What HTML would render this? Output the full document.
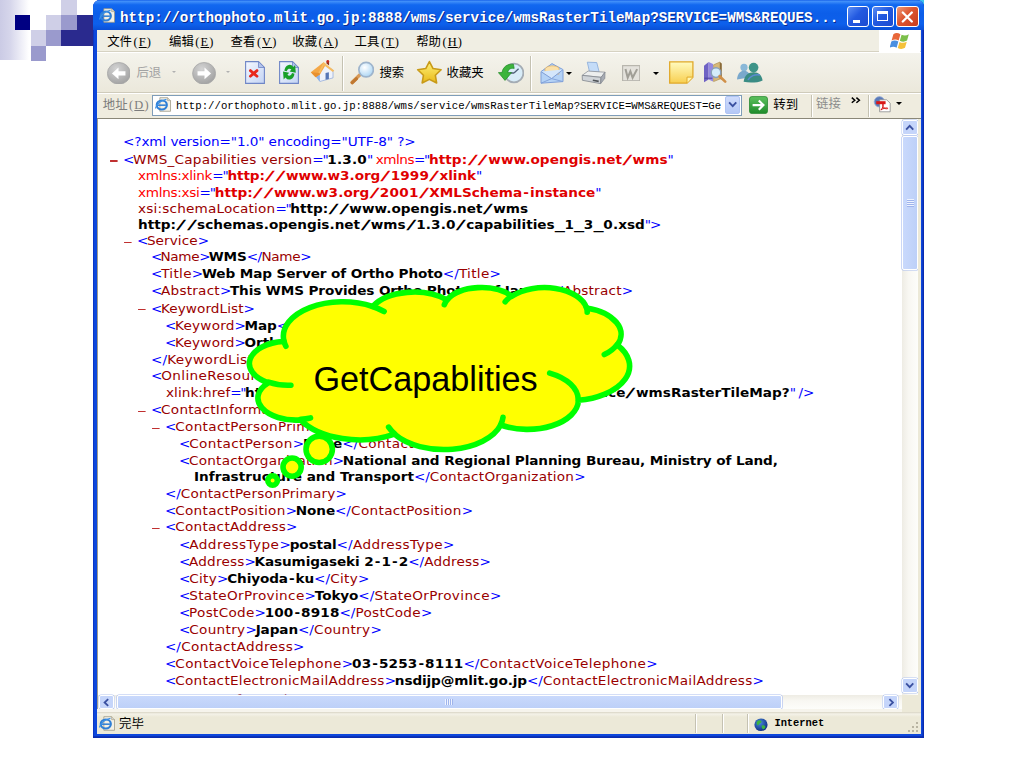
<!DOCTYPE html>
<html><head><meta charset="utf-8"><title>GetCapabilities</title>
<style>
html,body{margin:0;padding:0;}
body{width:1024px;height:768px;position:relative;overflow:hidden;background:#fff;font-family:"Liberation Sans","Noto Sans CJK SC",sans-serif;}
.abs,.sq,#win div,#win span,#win svg{position:absolute;}
/* slide decoration */
#grad{left:0;top:0;width:29px;height:60px;background:linear-gradient(to right,#cbcbe5 0%,#d6d6eb 35%,#ececf6 70%,#fff 100%);}
.sq{width:15.4px;height:15.2px;}
/* window chrome (page coordinates) */
#frame{left:93.3px;top:0;width:830.5px;height:738.3px;background:#0d47dc;border-radius:7px 7px 0 0;box-shadow:inset -1.4px -1.8px 0 #0a2cae,inset 1px 0 0 #0b36c4;}
#title{left:93.3px;top:0;width:830.5px;height:29.7px;border-radius:7px 7px 0 0;background:linear-gradient(to bottom,#1a64ea 0%,#3f8ef9 5%,#1268f0 16%,#0c5ee9 45%,#0d60ec 80%,#0a4fd6 100%);}
#titletxt{left:120px;top:8.5px;color:#fff;font:bold 14.25px/18px "Liberation Mono",monospace;white-space:pre;text-shadow:1px 1px 0 #0a2a8c;}
.cb{top:6.2px;width:21.6px;height:20.6px;border:1px solid #fff;border-radius:3px;box-sizing:border-box;background:linear-gradient(135deg,#5c8ff5 0%,#2259e0 45%,#1c4bd0 100%);}
#menubar{left:96.8px;top:29.6px;width:824px;height:22.6px;background:#f0eee3;border-bottom:1px solid #d6d2c2;box-sizing:border-box;}
.mi{top:33.5px;font:12.4px/15px "Noto Sans CJK SC","WenQuanYi Zen Hei",sans-serif;color:#000;white-space:pre;}
.mi em,.lat{font-style:normal;font-family:"Liberation Serif",serif;letter-spacing:1.1px;margin-left:1.5px}
#toolbar{left:96.8px;top:52.2px;width:824px;height:40.4px;background:linear-gradient(to bottom,#f4f3ec,#ebe8db);border-top:1px solid #fff;border-bottom:1px solid #cfcbbb;box-sizing:border-box;}
.tl{top:64.5px;font:12.4px/15px "Noto Sans CJK SC","WenQuanYi Zen Hei",sans-serif;white-space:pre;}
.sep{width:1px;background:#c5c2b2;box-shadow:1px 0 0 #fff;}
.dd{width:0;height:0;border-left:3px solid transparent;border-right:3px solid transparent;border-top:3px solid #000;}
#addrbar{left:96.8px;top:92.6px;width:824px;height:25.4px;background:#efecdf;border-top:1px solid #fff;box-sizing:border-box;}
#addrfield{left:152px;top:94.6px;width:589.5px;height:21px;background:#fff;border:1px solid #7f9db9;box-sizing:border-box;}
#addrtxt{left:176px;top:98.5px;font:10.7px/14px "Liberation Mono",monospace;color:#000;white-space:pre;}
#cborder{left:96.8px;top:117.8px;width:824px;height:1.2px;background:#8a8778;}
#content{left:98px;top:118.9px;width:803.8px;height:575.9px;background:#fff;overflow:hidden;}
#vscroll{left:901.8px;top:118.9px;width:16.4px;height:575.9px;background:linear-gradient(to right,#eeece4,#f8f7f2 40%,#fdfdfa);}
#hscroll{left:98px;top:694.8px;width:803.8px;height:14.6px;background:linear-gradient(to bottom,#eeece4,#f8f7f2 40%,#fdfdfa);}
.sbtn{background:#c5d5fa;border:1px solid #fff;border-radius:2px;box-sizing:border-box;box-shadow:0 0 0 .5px #b4c6f0;}
.thumb{background:linear-gradient(to right,#c9d9fc,#bdd0f8);border:1px solid #fff;border-radius:2px;box-sizing:border-box;box-shadow:0 0 0 .6px #a9bdf0;}
#status{left:96.8px;top:711.6px;width:824px;height:22px;background:linear-gradient(to bottom,#d8d4c4 0,#f4f2e8 2px,#ece9d8 5px,#ece9d8 100%);}
/* xml */
#xml{left:0;top:0;width:1000px;font:12.6px/16.78px "DejaVu Sans","Liberation Sans",sans-serif;color:#000;}
#xml .ln{--d:0px;--e:0px;letter-spacing:calc(0.25px + var(--d));white-space:pre;height:16.78px;position:absolute;transform:scaleX(1.08);transform-origin:0 0;}
#xml span,#xml b,#xml i{position:static}
.m{color:#0000ff;letter-spacing:calc(-1.2px + var(--d))}.t{color:#990000}.pi{color:#0000ff}.ns{color:#ff0000;letter-spacing:calc(-0.4px + var(--d))}
#xml b{font-weight:bold;letter-spacing:calc(-0.1px + var(--e))}
#xml b.ns{color:#e00000}
#xml i{font-style:normal}
.w4{display:inline-block;width:9.8px;text-align:center;transform:scaleX(1.55) skewX(-8deg)}.sl{padding:0 1.3px 0 1.1px}.w3{display:inline-block;width:9px;text-align:center;transform:scaleX(1.5)}.w1{padding:0 1px}.dg{letter-spacing:calc(0.1px + var(--e))}
#xml .mk{position:absolute;left:-11.9px;top:8.5px;width:6.5px;height:1.3px;background:#c03030;overflow:hidden;color:transparent;font-size:1px;letter-spacing:0}
</style></head><body>
<div id="grad" class="abs"></div>
<div class="sq" style="left:14.8px;top:15.3px;width:15.6px;height:15.1px;background:#000082"></div>
<div class="sq" style="left:61.2px;top:0.0px;width:15.7px;height:15.2px;background:#cfcfe7"></div>
<div class="sq" style="left:46.2px;top:15.2px;width:15.0px;height:15.2px;background:#cfcfe7"></div>
<div class="sq" style="left:61.2px;top:15.2px;width:15.7px;height:15.2px;background:#9a9acd"></div>
<div class="sq" style="left:76.9px;top:15.2px;width:18.1px;height:15.2px;background:#2a2a8e"></div>
<div class="sq" style="left:31.0px;top:30.4px;width:15.2px;height:15.2px;background:#cfcfe7"></div>
<div class="sq" style="left:46.2px;top:30.4px;width:15.0px;height:15.2px;background:#9a9acd"></div>
<div class="sq" style="left:61.2px;top:30.4px;width:33.8px;height:15.2px;background:#2a2a8e"></div>
<div class="sq" style="left:31.0px;top:45.6px;width:15.0px;height:15.0px;background:#9a9acd"></div>
<div class="sq" style="left:851.8px;top:0;width:40px;height:3px;background:#0a1f66"></div>
<div class="sq" style="left:891.7px;top:0;width:32px;height:6px;background:#3cc4ee"></div>
<div id="win">
 <div id="frame"></div>
 <div id="title"></div>
<svg style="left:99.0px;top:8.4px" width="16.5" height="15.0" viewBox="0 0 17 15"><path d="M5 .5h8l3 3v11H5z" fill="#f4f1e6" stroke="#9a9684" stroke-width=".8"/><path d="M13 .5v3h3" fill="#dcd8c8" stroke="#9a9684" stroke-width=".6"/><ellipse cx="7" cy="8" rx="5.2" ry="4.6" fill="none" stroke="#2f7fd6" stroke-width="2.2"/><path d="M2.6 8.2h8.6" stroke="#2f7fd6" stroke-width="1.6"/><path d="M.6 11.6C1 7.5 6 3 11.8 2.2" fill="none" stroke="#3a8fe6" stroke-width="1.3"/></svg>
<div id="titletxt">http://orthophoto.mlit.go.jp:8888/wms/service/wmsRasterTileMap?SERVICE=WMS&amp;REQUES...</div>
<div class="cb" style="left:847.4px"><div style="left:4.6px;top:12.6px;width:7px;height:3px;background:#fff"></div></div>
<div class="cb" style="left:872px"><div style="left:4.4px;top:3.8px;width:10.6px;height:10px;border:1.4px solid #fff;border-top-width:3px;box-sizing:border-box"></div></div>
<div class="cb" style="left:896.4px;width:22.2px;background:linear-gradient(135deg,#f09a78 0%,#dc5530 45%,#c83c1c 100%)"><svg style="left:4px;top:3.4px" width="12.6" height="12" viewBox="0 0 12 12"><path d="M1.5 1.5l9 9M10.5 1.5l-9 9" stroke="#fff" stroke-width="2.3" stroke-linecap="round"/></svg></div>
 <div id="menubar"></div>
<span class="mi" style="left:107.2px">文件<em>(<u>F</u>)</em></span>
<span class="mi" style="left:169.0px">编辑<em>(<u>E</u>)</em></span>
<span class="mi" style="left:230.6px">查看<em>(<u>V</u>)</em></span>
<span class="mi" style="left:292.3px">收藏<em>(<u>A</u>)</em></span>
<span class="mi" style="left:354.6px">工具<em>(<u>T</u>)</em></span>
<span class="mi" style="left:416.2px">帮助<em>(<u>H</u>)</em></span>
<div style="left:878.7px;top:29.8px;width:41.7px;height:22.2px;background:#fff"></div>
<svg style="left:889.5px;top:31.5px" width="22" height="17.6" viewBox="0 0 22 18"><path d="M3.2 2.2C5.6 .6 8 .8 10.4 2.2L8.6 8.6C6.4 7.4 4 7.2 1.4 8.6z" fill="#e8673a"/><path d="M11.6 2.8C14 4 16.4 4 19 2.4L17.2 8.8C14.8 10.2 12.2 10.2 9.8 9z" fill="#7cbf4a"/><path d="M1.1 9.8C3.6 8.4 6 8.6 8.3 9.8L6.5 16C4.2 14.8 1.8 14.8-.7 16.2z" fill="#4a8fe0"/><path d="M9.5 10.2C11.9 11.4 14.4 11.4 16.9 10L15.1 16.2C12.7 17.6 10.2 17.6 7.7 16.4z" fill="#f5c13a"/></svg>
 <div id="toolbar"></div>
<svg width="0" height="0" style="left:0;top:0"><defs><radialGradient id="gGrey" cx=".4" cy=".3" r=".8"><stop offset="0" stop-color="#d4d4d4"/><stop offset="1" stop-color="#9c9c9c"/></radialGradient><linearGradient id="gPage" x1="0" y1="0" x2="1" y2="1"><stop offset="0" stop-color="#f4f8ff"/><stop offset="1" stop-color="#c4d4f4"/></linearGradient><linearGradient id="gStar" x1="0" y1="0" x2="0" y2="1"><stop offset="0" stop-color="#fff27a"/><stop offset="1" stop-color="#e8b818"/></linearGradient><linearGradient id="gNote" x1="0" y1="0" x2="0" y2="1"><stop offset="0" stop-color="#fffbc0"/><stop offset="1" stop-color="#f8cf50"/></linearGradient><linearGradient id="gGo" x1="0" y1="0" x2="0" y2="1"><stop offset="0" stop-color="#5ec25e"/><stop offset="1" stop-color="#1e8a2a"/></linearGradient><radialGradient id="gLens" cx=".4" cy=".35" r=".7"><stop offset="0" stop-color="#ffffff"/><stop offset="1" stop-color="#a8d4f4"/></radialGradient><radialGradient id="gGlobe" cx=".4" cy=".35" r=".7"><stop offset="0" stop-color="#4a8adc"/><stop offset="1" stop-color="#0c2a80"/></radialGradient></defs></svg>
<svg style="left:106.6px;top:61.5px" width="23.8" height="22.8" viewBox="0 0 24 23"><ellipse cx="12" cy="11.5" rx="11.6" ry="11" fill="url(#gGrey)" stroke="#a8a8a8" stroke-width=".8"/><path d="M5 11.5l6.6-6v3.8h7v4.4h-7v3.8z" fill="#fff"/></svg>
<span class="tl" style="left:136.4px;color:#a3a3a3">后退</span>
<div class="dd" style="left:172px;top:70.8px;border-top-color:#b0b0b0;border-width:2.6px"></div>
<svg style="left:191.8px;top:61.5px" width="24.2" height="22.8" viewBox="0 0 24 23"><ellipse cx="12" cy="11.5" rx="11.6" ry="11" fill="url(#gGrey)" stroke="#a8a8a8" stroke-width=".8"/><path d="M19 11.5l-6.6-6v3.8h-7v4.4h7v3.8z" fill="#fff"/></svg>
<div class="dd" style="left:226px;top:70.8px;border-top-color:#b0b0b0;border-width:2.6px"></div>
<svg style="left:245.0px;top:61.0px" width="20.0" height="23.0" viewBox="0 0 20 23"><path d="M.6 .6H13.5L19.4 6.5V22.4H.6z" fill="url(#gPage)" stroke="#6f86c6" stroke-width="1.1"/><path d="M13.5 .6V6.5H19.4z" fill="#b4c4ec" stroke="#6f86c6" stroke-width=".8"/><path d="M5.4 9.6l6.6 5.6M12 9.6l-6.600 5.600" stroke="#e8281c" stroke-width="2.800" stroke-linecap="round"/></svg>
<svg style="left:278.8px;top:61.0px" width="20.0" height="23.0" viewBox="0 0 20 23"><path d="M.6 .6H13.5L19.4 6.5V22.4H.6z" fill="url(#gPage)" stroke="#6f86c6" stroke-width="1.1"/><path d="M13.5 .6V6.5H19.4z" fill="#b4c4ec" stroke="#6f86c6" stroke-width=".8"/><g transform="translate(10.4 11.2) scale(1.1 1.45) translate(-10 -12.2)"><path d="M5.4 11.2a4.8 4.8 0 0 1 8.2-2.6l1.6-1.4.6 5.4-5.6-.8 1.6-1.4a2.6 2.6 0 0 0-4.2 1.2z" fill="#18a028"/><path d="M14.6 13.2a4.8 4.8 0 0 1-8.2 2.6l-1.6 1.4-.6-5.4 5.6.8-1.6 1.4a2.6 2.6 0 0 0 4.2-1.2z" fill="#18a028"/></g></svg>
<svg style="left:310.4px;top:60.4px" width="25.0" height="23.6" viewBox="0 0 25 24"><path d="M2.6 12.4l7.4 9.4 13.2-3.6V10.4L14.2 4z" fill="#eef2fb" stroke="#8aa4d8" stroke-width=".7"/><path d="M2.4 12.6l7.4 9.6V13.8l-4-3z" fill="#8fb4ea"/><path d="M.6 12.4L13.6 2.4l2.6 1.8-6.2 10.4-4.6 3z" fill="#f4a848"/><path d="M.6 12.400l5 5.200 4.400-3 .2-1.400z" fill="#e89030"/><path d="M13.6 2.400l10.800 8.400-1.400 1.400-9-6.800-4.200 8.400-1.400-.8z" fill="#f7bc62"/><path d="M15.600 13.200l3.400-.8v6.800l-3.400.9z" fill="#5676b6"/><path d="M16.600 1.400h2.600v4.200l-2.600-2z" fill="#8a3020"/><circle cx="17.900" cy="1.500" r="1.400" fill="#c8281c"/></svg>
<div class="sep" style="left:342.4px;top:56px;height:35px"></div>
<svg style="left:348.6px;top:61.4px" width="25.6" height="23.4" viewBox="0 0 26 23"><path d="M3 21.4l9.4-9" stroke="#d89a58" stroke-width="3.4" stroke-linecap="round"/><path d="M3.4 21.6l4-3.8" stroke="#c07830" stroke-width="3.4" stroke-linecap="round"/><circle cx="17.4" cy="8.4" r="7.4" fill="url(#gLens)" stroke="#9eb4cc" stroke-width="1.7"/></svg>
<span class="tl" style="left:379.4px;color:#000">搜索</span>
<svg style="left:415.6px;top:60.4px" width="26.8" height="24.4" viewBox="0 0 27 24"><path d="M13.5 1.3 L17.2 8.3 L25.3 9.5 L19.5 15.1 L20.8 22.8 L13.5 19.2 L6.2 22.8 L7.5 15.1 L1.7 9.5 L9.8 8.3z" fill="url(#gStar)" stroke="#c89a18" stroke-width="1.6" stroke-linejoin="round"/></svg>
<span class="tl" style="left:446.6px;color:#000">收藏夹</span>
<svg style="left:497.6px;top:62.0px" width="26.0" height="22.0" viewBox="0 0 26 22"><circle cx="16" cy="11" r="9.4" fill="#d8ecf8" stroke="#a4acb4" stroke-width="1.8"/><path d="M16 11l4.6-4.2M16 11h-4" stroke="#50607a" stroke-width="1.3"/><path d="M.4 10.600h3.600C4.800 5 9.400 1.600 15.400 2.200l.8 4.200C12 5.800 10 7.800 9.800 10.600h3.800L7 18.400z" fill="#3cb43c" stroke="#1e8a22" stroke-width=".7"/></svg>
<div class="sep" style="left:530.4px;top:56px;height:35px"></div>
<svg style="left:539.6px;top:61.4px" width="24.0" height="23.4" viewBox="0 0 24 23"><path d="M1 10.4L12 2.4l11 6v12L1 22z" fill="#b4d2f6" stroke="#7f9fd8" stroke-width="1"/><path d="M5 7.5c2-3.4 11-4 14-.6v6H5z" fill="#fbe0a8" stroke="#e0a850" stroke-width=".6"/><path d="M1 10.4l10.6 7 11.4-9" fill="#d4e6fb" stroke="#7f9fd8" stroke-width="1"/><path d="M1 22l10.6-4.6L23 20.4" fill="none" stroke="#7f9fd8" stroke-width=".9"/></svg>
<div class="dd" style="left:565.8px;top:72px"></div>
<svg style="left:580.6px;top:60.6px" width="25.6" height="24.0" viewBox="0 0 26 24"><path d="M6.4 1l9.6.4 2.4 9.4-9.8-.2z" fill="#c4dcf8" stroke="#86a8d8" stroke-width=".8"/><path d="M1.2 14.4l6-4.4 17.2 1.2-4 5.2z" fill="#eceeee" stroke="#8c9098" stroke-width=".8"/><path d="M1.2 14.4l.2 5 18.4 3.4.4-6.4z" fill="#d0d4d8" stroke="#80848c" stroke-width=".8"/><path d="M24.4 11.2l-4 5.2-.4 6.4 4.2-5.4z" fill="#a8acb4" stroke="#80848c" stroke-width=".7"/><path d="M12 19.4l6 1.1" stroke="#505458" stroke-width="1.6"/></svg>
<svg style="left:622.0px;top:65.0px" width="18.4" height="16.4" viewBox="0 0 18 16"><rect x=".6" y=".6" width="16.8" height="14.8" fill="#e4e2dc" stroke="#b4b2aa" stroke-width="1.1"/><path d="M3.4 4l2.2 8.4 2.6-6.2 2.2 6.2L14.8 4" fill="none" stroke="#a09e96" stroke-width="2"/></svg>
<div class="dd" style="left:653px;top:72px"></div>
<svg style="left:669.2px;top:61.4px" width="24.6" height="22.8" viewBox="0 0 25 23"><path d="M.7 .7h23.6v15.6l-6 6H.7z" fill="url(#gNote)" stroke="#e0a828" stroke-width="1.3"/><path d="M24.3 16.3h-6v6" fill="#fff6b0" stroke="#e0a828" stroke-width="1"/></svg>
<svg style="left:702.6px;top:61.4px" width="24.0" height="22.4" viewBox="0 0 24 22"><path d="M1 4.6l4.6-3.8v17.6L1 21z" fill="#6f62c4"/><path d="M5.6 .8l4.4 2v17.4l-4.4-1.8z" fill="#9488e0"/><path d="M1.4 17h8" stroke="#4a409c" stroke-width="1"/><path d="M10.6 3.6l6.4-2.8v17l-6.4 2.6z" fill="#d8b878" stroke="#a88848" stroke-width=".6"/><path d="M17 1l1.8 1.2v16.4L17 17.8z" fill="#8a6a38"/><circle cx="13" cy="11.4" r="4.8" fill="#d4ecfa" stroke="#8aa0b8" stroke-width="1.5"/><path d="M16.6 15l5.6 5.4" stroke="#d09048" stroke-width="2.6" stroke-linecap="round"/></svg>
<svg style="left:736.4px;top:62.2px" width="27.0" height="21.0" viewBox="0 0 27 21"><circle cx="8" cy="5.4" r="3.6" fill="#8ab8d8"/><path d="M1 17.4c.6-6 3.4-8.6 7-8.6s5.6 2.4 6.4 6.4z" fill="#7aa8cc"/><circle cx="17.6" cy="5.6" r="4.8" fill="#3e9488"/><path d="M7.6 19.8c1-7 4.8-9.6 10-9.6s8.2 3 9 8.2c-5 2.4-13 2.8-19 1.4z" fill="#3a8c84"/><path d="M12 18c2-4 7-6 12-5" stroke="#5a8ad0" stroke-width="1.6" fill="none"/></svg>
 <div id="addrbar"></div>
<span class="mi" style="left:102.8px;top:96.5px;color:#7c7c7c">地址<em>(<u>D</u>)</em></span>
<div id="addrfield"></div>
<svg style="left:155.0px;top:97.0px" width="16.5" height="15.0" viewBox="0 0 17 15"><path d="M5 .5h8l3 3v11H5z" fill="#f4f1e6" stroke="#9a9684" stroke-width=".8"/><path d="M13 .5v3h3" fill="#dcd8c8" stroke="#9a9684" stroke-width=".6"/><ellipse cx="7" cy="8" rx="5.2" ry="4.6" fill="none" stroke="#2f7fd6" stroke-width="2.2"/><path d="M2.6 8.2h8.6" stroke="#2f7fd6" stroke-width="1.6"/><path d="M.6 11.6C1 7.5 6 3 11.8 2.2" fill="none" stroke="#3a8fe6" stroke-width="1.3"/></svg>
<div id="addrtxt">http://orthophoto.mlit.go.jp:8888/wms/service/wmsRasterTileMap?SERVICE=WMS&amp;REQUEST=Ge</div>
<div style="left:724.6px;top:96px;width:15.4px;height:17.6px;background:linear-gradient(to bottom,#cfdcfc,#b4c8f6);border-radius:2px;border:1px solid #b0c4f4;box-sizing:border-box"></div>
<svg style="left:727.6px;top:101.4px" width="9.4" height="7.0" viewBox="0 0 10 7"><path d="M1.2 1.2l3.8 4 3.8-4" fill="none" stroke="#3a50a0" stroke-width="2"/></svg>
<svg style="left:749.0px;top:96.0px" width="19.0" height="18.2" viewBox="0 0 19 18"><rect x=".5" y=".5" width="18" height="17" rx="2.4" fill="url(#gGo)" stroke="#2a8a32" stroke-width=".8"/><path d="M3.6 9h10.4M9.8 4.4l4.6 4.6-4.6 4.6" fill="none" stroke="#fff" stroke-width="2.2"/></svg>
<span class="mi" style="left:773.3px;top:96.8px">转到</span>
<div class="sep" style="left:810.6px;top:95px;height:22px"></div>
<span class="mi" style="left:816px;top:95.8px;color:#8c8c8c">链接</span>
<svg style="left:850.6px;top:97.4px" width="10.0" height="6.4" viewBox="0 0 10 6.4"><path d="M.8 .6l3 2.6-3 2.6M5.4 .6l3 2.6-3 2.6" fill="none" stroke="#000" stroke-width="1.5"/></svg>
<div class="sep" style="left:867.6px;top:95px;height:22px"></div>
<svg style="left:872.6px;top:96.4px" width="18.0" height="16.4" viewBox="0 0 18 16"><circle cx="6.4" cy="5.6" r="5.2" fill="#5a7ab8" stroke="#9ab0d8" stroke-width=".8"/><path d="M6.6 3.6h7l3.6 3.4v8.6H6.6z" fill="#fff" stroke="#8a8a8a" stroke-width=".8"/><path d="M3.2 5h9.4v3H3.2z" fill="#d81818"/><path d="M8.4 13.6c1.4-2.6 2.2-4.6 1.8-5.6-.6-1.2-1.4 2 1 3.8 1.6 1.2 4 .8 3.6.2-.6-.8-4.6.2-7 1.6z" fill="none" stroke="#d81818" stroke-width="1"/></svg>
<div class="dd" style="left:896px;top:102.4px"></div>
 <div id="cborder"></div>
 <div id="content"><div id="xml">
<div class="ln" id="l1" style="left:24.7px;top:15.6px;--d:-0.346px;--e:0.000px"><span class="pi">&lt;?xml version="1.0" encoding="UTF-8" ?&gt;</span></div>
<div class="ln" id="l2" style="left:24.7px;top:32.9px;--d:-0.050px;--e:0.142px"><span class="mk">-</span><span class="m">&lt;</span><span class="t">WMS_Capabilities version</span><span class="m">="</span><b><i class="dg">1</i>.<i class="dg">3</i>.<i class="dg">0</i></b><span class="m">"</span><span class="ns"> xmlns</span><span class="m">="</span><b class="ns">http:<i class="w4">/</i><i class="w4">/</i>www.opengis.net<i class="w4">/</i>wms</b><span class="m">"</span></div>
<div class="ln" id="l3" style="left:39.7px;top:49.5px;--d:0.121px;--e:0.000px"><span class="ns">xmlns:xlink</span><span class="m">="</span><b class="ns">http:<i class="w4">/</i><i class="w4">/</i>www.w<i class="dg">3</i>.org<i class="w4">/</i><i class="dg">1</i><i class="dg">9</i><i class="dg">9</i><i class="dg">9</i><i class="w4">/</i>xlink</b><span class="m">"</span></div>
<div class="ln" id="l4" style="left:39.7px;top:65.8px;--d:0.113px;--e:0.113px"><span class="ns">xmlns:xsi</span><span class="m">="</span><b class="ns">http:<i class="w4">/</i><i class="w4">/</i>www.w<i class="dg">3</i>.org<i class="w4">/</i><i class="dg">2</i><i class="dg">0</i><i class="dg">0</i><i class="dg">1</i><i class="w4">/</i>XMLSchema<i class="w1">-</i>instance</b><span class="m">"</span></div>
<div class="ln" id="l5" style="left:39.7px;top:81.8px;--d:-0.085px;--e:0.110px"><span class="t">xsi:schemaLocation</span><span class="m">="</span><b>http:<i class="w4">/</i><i class="w4">/</i>www.opengis.net<i class="w4">/</i>wms</b></div>
<div class="ln" id="l6" style="left:39.7px;top:98.0px;--d:0.112px;--e:0.112px"><b>http:<i class="w4">/</i><i class="w4">/</i>schemas.opengis.net<i class="w4">/</i>wms<i class="w4">/</i><i class="dg">1</i>.<i class="dg">3</i>.<i class="dg">0</i><i class="w4">/</i>capabilities<i class="w3">_</i><i class="dg">1</i><i class="w3">_</i><i class="dg">3</i><i class="w3">_</i><i class="dg">0</i>.xsd</b><span class="m">"&gt;</span></div>
<div class="ln" id="l7" style="left:38.7px;top:114.4px;--d:-0.185px;--e:0.000px"><span class="mk">-</span><span class="m">&lt;</span><span class="t">Service</span><span class="m">&gt;</span></div>
<div class="ln" id="l8" style="left:52.7px;top:130.6px;--d:-0.571px;--e:0.000px"><span class="m">&lt;</span><span class="t">Name</span><span class="m">&gt;</span><b>WMS</b><span class="m">&lt;<i class="sl">/</i></span><span class="t">Name</span><span class="m">&gt;</span></div>
<div class="ln" id="l9" style="left:52.7px;top:147.4px;--d:0.030px;--e:0.000px"><span class="m">&lt;</span><span class="t">Title</span><span class="m">&gt;</span><b>Web Map Server of Ortho Photo</b><span class="m">&lt;<i class="sl">/</i></span><span class="t">Title</span><span class="m">&gt;</span></div>
<div class="ln" id="l10" style="left:52.7px;top:164.6px;--d:-0.050px;--e:0.002px"><span class="m">&lt;</span><span class="t">Abstract</span><span class="m">&gt;</span><b>This WMS Provides Ortho Photo<i style="padding-left:8.6px"> of Japan</i></b><span class="m">&lt;<i class="sl">/</i></span><span class="t">Abstract</span><span class="m">&gt;</span></div>
<div class="ln" id="l11" style="left:52.7px;top:181.8px;--d:-0.181px;--e:0.000px"><span class="mk">-</span><span class="m">&lt;</span><span class="t">KeywordList</span><span class="m">&gt;</span></div>
<div class="ln" id="l12" style="left:66.7px;top:198.8px;--d:-0.060px;--e:0.000px"><span class="m">&lt;</span><span class="t">Keyword</span><span class="m">&gt;</span><b>Map</b><span class="m">&lt;<i class="sl">/</i></span><span class="t">Keyword</span><span class="m">&gt;</span></div>
<div class="ln" id="l13" style="left:66.7px;top:215.8px;--d:-0.060px;--e:0.000px"><span class="m">&lt;</span><span class="t">Keyword</span><span class="m">&gt;</span><b>Ortho Photo</b><span class="m">&lt;<i class="sl">/</i></span><span class="t">Keyword</span><span class="m">&gt;</span></div>
<div class="ln" id="l14" style="left:52.7px;top:232.7px;--d:0.100px;--e:0.000px"><span class="m">&lt;<i class="sl">/</i></span><span class="t">KeywordList</span><span class="m">&gt;</span></div>
<div class="ln" id="l15" style="left:52.7px;top:249.6px;--d:0.100px;--e:0.000px"><span class="m">&lt;</span><span class="t">OnlineResource</span><span class="ns"> xmlns:xlink</span><span class="m">="</span><b class="ns">http:<i class="w4">/</i><i class="w4">/</i>www.w<i class="dg">3</i>.org<i class="w4">/</i><i class="dg">1</i><i class="dg">9</i><i class="dg">9</i><i class="dg">9</i><i class="w4">/</i>xlink</b><span class="m">"</span></div>
<div class="ln" id="l16" style="left:67.7px;top:266.6px;--d:-0.200px;--e:0.127px"><span class="t">xlink:href</span><span class="m">="</span><b>http:<i class="w4">/</i><i class="w4">/</i>orthophoto.mlit.go.jp:<i class="dg">8</i><i class="dg">8</i><i class="dg">8</i><i class="dg">8</i><i class="w4">/</i>wms<i class="w4">/</i>service<i class="w4">/</i>wmsRasterTileMap?</b><span class="m">" <i class="sl">/</i>&gt;</span></div>
<div class="ln" id="l17" style="left:52.7px;top:283.5px;--d:-0.020px;--e:0.000px"><span class="mk">-</span><span class="m">&lt;</span><span class="t">ContactInformation</span><span class="m">&gt;</span></div>
<div class="ln" id="l18" style="left:66.7px;top:300.4px;--d:0.050px;--e:0.000px"><span class="mk">-</span><span class="m">&lt;</span><span class="t">ContactPersonPrimary</span><span class="m">&gt;</span></div>
<div class="ln" id="l19" style="left:80.7px;top:317.0px;--d:0.100px;--e:0.000px"><span class="m">&lt;</span><span class="t">ContactPerson</span><span class="m">&gt;</span><b>None</b><span class="m">&lt;<i class="sl">/</i></span><span class="t">ContactPerson</span><span class="m">&gt;</span></div>
<div class="ln" id="l20" style="left:80.7px;top:333.8px;--d:-0.059px;--e:0.000px"><span class="m">&lt;</span><span class="t">ContactOrganization</span><span class="m">&gt;</span><b>National and Regional Planning Bureau, Ministry of Land,</b></div>
<div class="ln" id="l21" style="left:95.7px;top:350.5px;--d:-0.030px;--e:0.113px"><b>Infrastructure and Transport</b><span class="m">&lt;<i class="sl">/</i></span><span class="t">ContactOrganization</span><span class="m">&gt;</span></div>
<div class="ln" id="l22" style="left:66.7px;top:367.0px;--d:-0.087px;--e:0.000px"><span class="m">&lt;<i class="sl">/</i></span><span class="t">ContactPersonPrimary</span><span class="m">&gt;</span></div>
<div class="ln" id="l23" style="left:66.7px;top:383.7px;--d:0.038px;--e:0.000px"><span class="m">&lt;</span><span class="t">ContactPosition</span><span class="m">&gt;</span><b>None</b><span class="m">&lt;<i class="sl">/</i></span><span class="t">ContactPosition</span><span class="m">&gt;</span></div>
<div class="ln" id="l24" style="left:66.7px;top:400.6px;--d:0.008px;--e:0.000px"><span class="mk">-</span><span class="m">&lt;</span><span class="t">ContactAddress</span><span class="m">&gt;</span></div>
<div class="ln" id="l25" style="left:80.7px;top:417.7px;--d:0.149px;--e:0.000px"><span class="m">&lt;</span><span class="t">AddressType</span><span class="m">&gt;</span><b>postal</b><span class="m">&lt;<i class="sl">/</i></span><span class="t">AddressType</span><span class="m">&gt;</span></div>
<div class="ln" id="l26" style="left:80.7px;top:434.7px;--d:-0.079px;--e:0.000px"><span class="m">&lt;</span><span class="t">Address</span><span class="m">&gt;</span><b>Kasumigaseki <i class="dg">2</i><i class="w1">-</i><i class="dg">1</i><i class="w1">-</i><i class="dg">2</i></b><span class="m">&lt;<i class="sl">/</i></span><span class="t">Address</span><span class="m">&gt;</span></div>
<div class="ln" id="l27" style="left:80.7px;top:451.8px;--d:0.036px;--e:0.000px"><span class="m">&lt;</span><span class="t">City</span><span class="m">&gt;</span><b>Chiyoda<i class="w1">-</i>ku</b><span class="m">&lt;<i class="sl">/</i></span><span class="t">City</span><span class="m">&gt;</span></div>
<div class="ln" id="l28" style="left:80.7px;top:468.8px;--d:0.074px;--e:0.000px"><span class="m">&lt;</span><span class="t">StateOrProvince</span><span class="m">&gt;</span><b>Tokyo</b><span class="m">&lt;<i class="sl">/</i></span><span class="t">StateOrProvince</span><span class="m">&gt;</span></div>
<div class="ln" id="l29" style="left:80.7px;top:485.7px;--d:0.000px;--e:0.000px"><span class="m">&lt;</span><span class="t">PostCode</span><span class="m">&gt;</span><b><i class="dg">1</i><i class="dg">0</i><i class="dg">0</i><i class="w1">-</i><i class="dg">8</i><i class="dg">9</i><i class="dg">1</i><i class="dg">8</i></b><span class="m">&lt;<i class="sl">/</i></span><span class="t">PostCode</span><span class="m">&gt;</span></div>
<div class="ln" id="l30" style="left:80.7px;top:502.7px;--d:0.054px;--e:0.000px"><span class="m">&lt;</span><span class="t">Country</span><span class="m">&gt;</span><b>Japan</b><span class="m">&lt;<i class="sl">/</i></span><span class="t">Country</span><span class="m">&gt;</span></div>
<div class="ln" id="l31" style="left:66.7px;top:519.7px;--d:0.072px;--e:0.000px"><span class="m">&lt;<i class="sl">/</i></span><span class="t">ContactAddress</span><span class="m">&gt;</span></div>
<div class="ln" id="l32" style="left:66.7px;top:536.7px;--d:0.122px;--e:0.000px"><span class="m">&lt;</span><span class="t">ContactVoiceTelephone</span><span class="m">&gt;</span><b><i class="dg">0</i><i class="dg">3</i><i class="w1">-</i><i class="dg">5</i><i class="dg">2</i><i class="dg">5</i><i class="dg">3</i><i class="w1">-</i><i class="dg">8</i><i class="dg">1</i><i class="dg">1</i><i class="dg">1</i></b><span class="m">&lt;<i class="sl">/</i></span><span class="t">ContactVoiceTelephone</span><span class="m">&gt;</span></div>
<div class="ln" id="l33" style="left:66.7px;top:553.7px;--d:0.008px;--e:0.000px"><span class="m">&lt;</span><span class="t">ContactElectronicMailAddress</span><span class="m">&gt;</span><b>nsdijp@mlit.go.jp</b><span class="m">&lt;<i class="sl">/</i></span><span class="t">ContactElectronicMailAddress</span><span class="m">&gt;</span></div>
<div class="ln" id="l34" style="left:52.7px;top:573.3px;--d:0.100px;--e:0.000px"><span class="m">&lt;<i class="sl">/</i></span><span class="t">ContactInformation</span><span class="m">&gt;</span></div>

 </div></div>
 <div id="vscroll"></div><div id="hscroll"></div>
<div class="sbtn" style="left:902.2px;top:120.4px;width:15.6px;height:14.6px"></div>
<svg style="left:905.4px;top:124.0px" width="9.4" height="7.0" viewBox="0 0 10 7"><path d="M1.2 5.8l3.8-4 3.8 4" fill="none" stroke="#3a50a0" stroke-width="2"/></svg>
<div class="thumb" style="left:902.4px;top:136.4px;width:15.2px;height:133.4px"></div>
<div style="left:906.6px;top:199px;width:7px;height:7.6px;background:repeating-linear-gradient(to bottom,#eef3ff 0,#eef3ff 1px,#9fb4ec 1px,#9fb4ec 2px)"></div>
<div class="sbtn" style="left:902.2px;top:677.6px;width:15.6px;height:15.6px"></div>
<svg style="left:905.4px;top:682.0px" width="9.4" height="7.0" viewBox="0 0 10 7"><path d="M1.2 1.2l3.8 4 3.8-4" fill="none" stroke="#3a50a0" stroke-width="2"/></svg>
<div class="sbtn" style="left:99px;top:695.2px;width:14.6px;height:13.8px"></div>
<svg style="left:102.8px;top:697.6px" width="6.6" height="9.0" viewBox="0 0 7 10"><path d="M5.6 1.2l-4 3.8 4 3.8" fill="none" stroke="#3a50a0" stroke-width="2"/></svg>
<div class="thumb" style="left:116.8px;top:695.4px;width:664.8px;height:13.6px;background:linear-gradient(to bottom,#c9d9fc,#bdd0f8)"></div>
<div style="left:445px;top:698.6px;width:7.6px;height:6.6px;background:repeating-linear-gradient(to right,#eef3ff 0,#eef3ff 1px,#9fb4ec 1px,#9fb4ec 2px)"></div>
<div class="sbtn" style="left:883.4px;top:695.2px;width:15px;height:13.8px"></div>
<svg style="left:887.6px;top:697.6px" width="6.6" height="9.0" viewBox="0 0 7 10"><path d="M1.4 1.2l4 3.8-4 3.8" fill="none" stroke="#3a50a0" stroke-width="2"/></svg>
<div style="left:901.8px;top:694.8px;width:18.6px;height:16.8px;background:#ece9d8"></div>
<div style="left:918.2px;top:118.9px;width:2.7px;height:592.8px;background:#ece9d8"></div>
<div style="left:96.8px;top:709.4px;width:805px;height:2.2px;background:#f6f4ec"></div>
<div style="left:96.8px;top:118.9px;width:1.2px;height:590.5px;background:#a09c8c"></div>
 <div id="status"></div>
<svg style="left:98.6px;top:716.0px" width="16.5" height="15.0" viewBox="0 0 17 15"><path d="M5 .5h8l3 3v11H5z" fill="#f4f1e6" stroke="#9a9684" stroke-width=".8"/><path d="M13 .5v3h3" fill="#dcd8c8" stroke="#9a9684" stroke-width=".6"/><ellipse cx="7" cy="8" rx="5.2" ry="4.6" fill="none" stroke="#2f7fd6" stroke-width="2.2"/><path d="M2.6 8.2h8.6" stroke="#2f7fd6" stroke-width="1.6"/><path d="M.6 11.6C1 7.5 6 3 11.8 2.2" fill="none" stroke="#3a8fe6" stroke-width="1.3"/></svg>
<span class="mi" style="left:119px;top:715.6px">完毕</span>
<div class="sep" style="left:695.4px;top:714px;height:19px"></div>
<div class="sep" style="left:721.8px;top:714px;height:19px"></div>
<div class="sep" style="left:747.4px;top:714px;height:19px"></div>
<svg style="left:754.4px;top:717.6px" width="14.0" height="13.4" viewBox="0 0 14 13.4"><ellipse cx="7" cy="6.7" rx="6.6" ry="6.3" fill="url(#gGlobe)"/><path d="M3 3.4c1.4-1.6 3.6-1.4 4.4-.2.6 1.2-.6 2-1.8 2.4-1 .4-.6 1.8-1.8 1.6C2.600 7 2.200 4.600 3 3.400zM8 7.400c1.400-.600 3.200.200 3.400 1.400.200 1.400-1.200 2.600-2.400 2.400-1-.400-2-2.800-1-3.800z" fill="#3cb440"/></svg>
<span style="left:774.4px;top:717.4px;font:bold 10.4px/13px &quot;Liberation Mono&quot;,monospace;color:#000;white-space:pre">Internet</span>
<svg style="left:908.0px;top:721.6px" width="11.0" height="11.0" viewBox="0 0 11 11"><g fill="#b8b4a2"><rect x="8" y="8" width="2" height="2"/><rect x="4" y="8" width="2" height="2"/><rect x="0" y="8" width="2" height="2"/><rect x="8" y="4" width="2" height="2"/><rect x="4" y="4" width="2" height="2"/><rect x="8" y="0" width="2" height="2"/></g></svg>
</div>
<svg class="abs" style="left:0;top:0" width="1024" height="768" viewBox="0 0 1024 768">
<g fill="#ffff00" stroke="#00ff00" stroke-width="5.6" stroke-linecap="round" stroke-linejoin="round">
<path d="M283.9 340.9 A59.4 34.5 0 0 1 372.7 306.5 A46.9 27.3 0 0 1 447.0 299.9 A38.4 22.3 0 0 1 511.9 296.3 A42.7 24.7 0 0 1 586.5 307.9 A46.9 27.3 0 0 1 617.3 345.0 A59.6 34.6 0 0 1 578.4 400.3 A50.9 29.5 0 0 1 500.7 425.0 A59.4 34.6 0 0 1 394.5 434.2 A67.9 39.5 0 0 1 300.6 420.0 A38.3 22.2 0 0 1 268.2 382.8 A38.2 22.3 0 0 1 283.6 341.4Z"/>
<path fill="none" d="M290.9 385.2 A38.2 22.3 0 0 1 268.6 382.2 M310.5 417.9 A38.3 22.2 0 0 1 300.8 419.3 M394.5 433.6 A59.4 34.6 0 0 1 388.6 427.1 M503.0 417.3 A59.4 34.6 0 0 1 500.7 424.5 M549.7 373.1 A50.9 29.5 0 0 1 578.2 399.8 M617.1 344.6 A46.9 27.3 0 0 1 604.3 354.6 M586.5 307.3 A42.7 24.7 0 0 1 587.2 312.1 M505.2 301.8 A42.7 24.7 0 0 1 511.8 295.8 M444.3 304.7 A38.4 22.3 0 0 1 447.4 299.5 M372.7 306.5 A59.4 34.5 0 0 1 384.1 311.5 M285.9 346.2 A59.4 34.5 0 0 1 283.9 340.9"/>
<circle cx="319.2" cy="449.3" r="13.2"/><circle cx="292.1" cy="467.1" r="9.1"/><circle cx="272.6" cy="480.5" r="4.8"/>
</g>
<text x="313.5" y="390.7" textLength="224.2" lengthAdjust="spacingAndGlyphs" font-family="Liberation Sans, sans-serif" font-size="35.4" fill="#000">GetCapablities</text>
</svg>
</body></html>
